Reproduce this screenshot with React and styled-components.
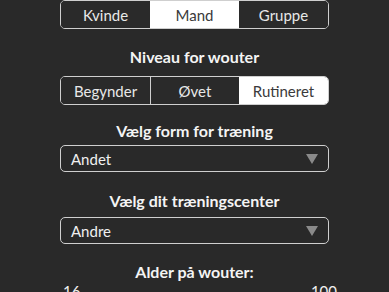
import React from "react";
import styled, { createGlobalStyle } from "styled-components";

const Global = createGlobalStyle`
  html, body { margin: 0; padding: 0; background: #292929; }
  body { font-family: "Lato", "Noto Sans", sans-serif; color: #f2f2f2; overflow: hidden; }
`;

const Page = styled.div`
  width: 389px;
  height: 292px;
  background: #292929;
  overflow: hidden;
  display: flex;
  justify-content: center;
  align-items: flex-start;
`;

const Column = styled.div`
  width: 269px;
  display: flex;
  flex-direction: column;
  flex-shrink: 0;
  & > * { flex-shrink: 0; }
`;

const Title = styled.div`
  font-weight: 700;
  font-size: 16px;
  line-height: 20px;
  text-align: center;
  color: #f4f4f4;
  margin-top: ${p => p.$mt || 0}px;
  margin-bottom: ${p => p.$mb || 0}px;
`;

const Segmented = styled.div`
  display: grid;
  grid-template-columns: repeat(3, 1fr);
  height: 29px;
  box-sizing: border-box;
  border: 1.5px solid #cfcfcf;
  border-radius: 5px;
  overflow: hidden;
`;

const Segment = styled.div`
  display: flex;
  align-items: center;
  justify-content: center;
  font-size: 15px;
  background: ${p => (p.$active ? "#ffffff" : "#2a2a2a")};
  color: ${p => (p.$active ? "#3a3a3a" : "#e8e8e8")};
  border-left: ${p => (p.$divider ? "1px solid #cfcfcf" : "none")};
`;

const Select = styled.div`
  height: 27px;
  box-sizing: border-box;
  border: 1.5px solid #cfcfcf;
  border-radius: 5px;
  display: flex;
  align-items: center;
  justify-content: space-between;
  padding: 0 10px 0 10px;
  font-size: 15px;
  color: #f0f0f0;
`;

const Arrow = styled.svg`
  width: 12px;
  height: 10px;
`;

const Range = styled.div`
  display: flex;
  justify-content: space-between;
  font-size: 15px;
  line-height: 18px;
  color: #f0f0f0;
  margin: 0 -8px 0 3px;
`;

function Seg({ items, active }) {
  return (
    <Segmented>
      {items.map((t, i) => (
        <Segment
          key={t}
          $active={i === active}
          $divider={i > 0 && i !== active && i - 1 !== active}
        >
          {t}
        </Segment>
      ))}
    </Segmented>
  );
}

function Dropdown({ value }) {
  return (
    <Select>
      <span>{value}</span>
      <Arrow viewBox="0 0 12 10">
        <path d="M0 0 H12 L6 10 Z" fill="#8a8a8a" />
      </Arrow>
    </Select>
  );
}

export default function App() {
  return (
    <Page>
      <Global />
      <Column>
        <Seg items={["Kvinde", "Mand", "Gruppe"]} active={1} />
        <Title $mt={18} $mb={9}>Niveau for wouter</Title>
        <Seg items={["Begynder", "Øvet", "Rutineret"]} active={2} />
        <Title $mt={16} $mb={4}>Vælg form for træning</Title>
        <Dropdown value="Andet" />
        <Title $mt={19} $mb={6}>Vælg dit træningscenter</Title>
        <Dropdown value="Andre" />
        <Title $mt={18}>Alder på wouter:</Title>
        <Range>
          <span>16</span>
          <span>100</span>
        </Range>
      </Column>
    </Page>
  );
}
